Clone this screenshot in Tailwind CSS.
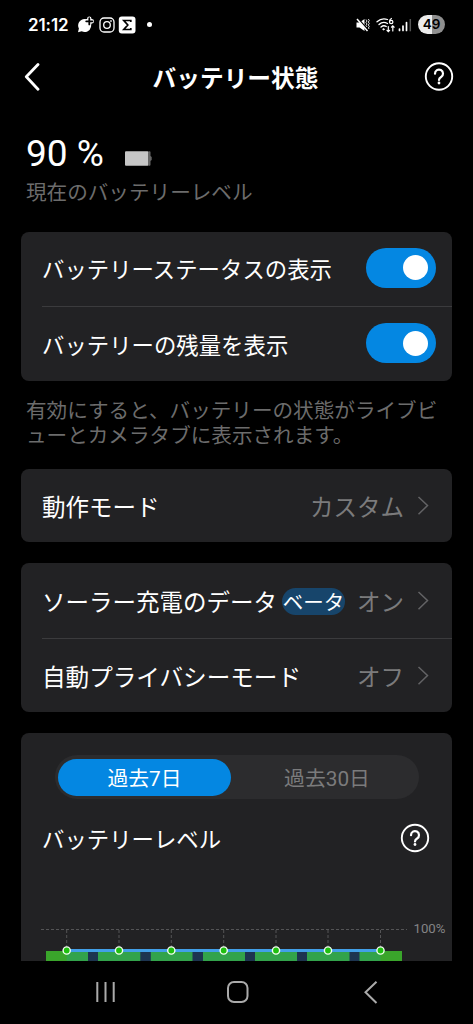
<!DOCTYPE html>
<html lang="ja">
<head>
<meta charset="utf-8">
<title>バッテリー状態</title>
<script src="https://cdn.jsdelivr.net/npm/@tailwindcss/browser@4"></script>
</head>
<body class="bg-black">
<div class="flex h-[1024px] w-[473px] flex-col overflow-hidden bg-black font-['Roboto','Noto_Sans_CJK_JP',sans-serif] text-white">

  <!-- Status bar -->
  <div class="flex h-[49px] shrink-0 items-center justify-between pr-[28px] pl-[28px]">
    <div class="flex items-center">
      <span class="w-[49px] font-['Inter'] text-[17px] leading-[20px] font-semibold tracking-[-0.1px] whitespace-nowrap">21:12</span>
      <svg class="h-[18px] w-[18px]" viewBox="0 0 18 18"><path d="M7.500 3a6.500 6.500 0 1 1-2.800 12.300L1 16.200l.9-3.600A6.500 6.500 0 0 1 7.500 3z" fill="#fff"/><path d="M12.300 2.800v5M9.800 5.300h5" stroke="#fff" stroke-width="4.400" stroke-linecap="round" stroke-linejoin="round"/><path d="M12.300 2.200v6.200M9.200 5.300h6.200" stroke="#000" stroke-width="1.800" stroke-linecap="round"/></svg>
      <svg class="ml-[3px] h-[18px] w-[18px]" viewBox="0 0 18 18" fill="none" stroke="#fff" stroke-width="1.300"><rect x="2" y="2" width="14" height="14" rx="4"/><circle cx="9" cy="9" r="3.300"/><circle cx="13" cy="5" r=".5" fill="#fff" stroke-width=".8"/></svg>
      <svg class="ml-[2px] h-[18px] w-[18px]" viewBox="0 0 18 18"><rect x=".8" y=".5" width="16.700" height="17" rx="3" fill="#fff"/><path d="M12.800 6V4.500H5.800L9.800 9l-4 4.500h7V12" fill="none" stroke="#000" stroke-width="1.700"/></svg>
      <span class="ml-[11px] h-[5px] w-[5px] rounded-full bg-white"></span>
    </div>
    <div class="flex items-center">
      <svg class="h-[16px] w-[14px]" viewBox="0 0 14 16"><path d="M.5 5.500h3L8.500 2v12L3.500 10.500h-3z" fill="#fff"/><path d="M1.800 1.200l10.500 12" stroke="#000" stroke-width="1.500"/><path d="M1 2l10.500 12" stroke="#fff" stroke-width="1.500"/><path d="M10 2.500l1 1.500-1 1.500 1 1.500-1 1.500 1 1.500M12.300 2l1 1.500-1 1.500 1 1.500-1 1.500 1 1.500-1 1.500 1 1" fill="none" stroke="#ddd" stroke-width="1"/></svg>
      <svg class="ml-[6px] h-[18px] w-[20px]" viewBox="0 0 20 18" fill="none" stroke="#fff" stroke-width="1.300" stroke-linecap="round"><path d="M1 5.800C4 3 8 2.200 11.500 3.500M3 8.500c2.500-2.300 5.800-2.600 8.500-1M5 11c1.700-1.400 3.700-1.500 5.300-.5"/><circle cx="7.500" cy="13.300" r=".8" fill="#fff" stroke-width=".6"/><path d="M15.400 2.500c-1.300.7-1.900 1.900-1.900 3.200M12.300 10.500v5M11 14.300l1.300 1.400 1.300-1.400M16.800 15v-5M15.500 11.200l1.300-1.400 1.300 1.400" stroke-width="1.200"/><circle cx="15.200" cy="6" r="1.700" stroke-width="1.200"/></svg>
      <svg class="ml-[2px] h-[16px] w-[14px]" viewBox="0 0 14 16"><path d="M1.500 12v1.500M5 9v4.500M8.500 5.500v8" stroke="#fff" stroke-width="1.700" stroke-linecap="round"/><path d="M12.300 2v12.300" stroke="#555" stroke-width="1.500"/></svg>
      <div class="ml-[6px] flex h-[19px] w-[27px] items-center justify-center rounded-full bg-linear-to-r from-[#ececec] from-50% to-[#8f8f8f] to-50% font-['Inter'] text-[13.500px] font-semibold text-black">49</div>
    </div>
  </div>

  <!-- App header -->
  <div class="flex h-[56px] shrink-0 items-center justify-between pr-[19px] pl-[24px]">
    <svg class="h-[28px] w-[29px]" viewBox="0 0 29 28"><path d="M14 1.500L2.300 13.800 14 26.200" fill="none" stroke="#fff" stroke-width="2.800" stroke-linecap="round" stroke-linejoin="round"/></svg>
    <h1 class="pt-[3px] pr-[6px] text-[23.700px] leading-[36px] font-bold whitespace-nowrap">バッテリー状態</h1>
    <svg class="h-[30px] w-[30px]" viewBox="0 0 30 30" fill="none" stroke="#fff"><circle cx="15" cy="14.500" r="13.200" stroke-width="1.900"/><path d="M11 11.700a4 4 0 1 1 6.100 3.300c-1.400.9-2.100 1.500-2.100 3" stroke-width="2.200" stroke-linecap="round"/><circle cx="15" cy="21" r="1.400" fill="#fff" stroke="none"/></svg>
  </div>

  <!-- Current level -->
  <div class="flex h-[127px] shrink-0 flex-col pt-[29px] pl-[26px]">
    <div class="flex items-end">
      <span class="text-[37px] leading-[40px] whitespace-nowrap">90 %</span>
      <svg class="mb-[8px] ml-[21px] h-[16px] w-[27px]" viewBox="0 0 27 16"><rect x="0" y="1.200" width="23.500" height="14.500" rx="1" fill="#c6c6c6"/><path d="M23.500 1.200h1a1 1 0 0 1 1 1V6l1.200 1v3l-1.200 1v3.700a1 1 0 0 1-1 1h-1z" fill="#666"/></svg>
    </div>
    <span class="mt-[4px] text-[20.600px] leading-[30px] whitespace-nowrap text-[#6c6c6c]">現在のバッテリーレベル</span>
  </div>

  <!-- Display toggles -->
  <section class="mx-[21px] flex h-[149px] shrink-0 flex-col rounded-[8px] bg-[#222224] pl-[21px]">
    <div class="flex h-[74px] items-center justify-between pr-[16px]">
      <span class="pt-[3px] text-[22.400px] leading-[32px] whitespace-nowrap">バッテリーステータスの表示</span>
      <span class="mb-[2px] flex h-[40px] w-[70px] items-center justify-end rounded-full bg-[#0487e2] pr-[8px]"><span class="h-[25px] w-[25px] rounded-full bg-white"></span></span>
    </div>
    <div class="h-[1.500px] bg-[#3b3b3d]"></div>
    <div class="flex h-[74px] items-center justify-between pr-[16px]">
      <span class="pt-[3px] text-[22.400px] leading-[32px] whitespace-nowrap">バッテリーの残量を表示</span>
      <span class="mb-[2px] flex h-[40px] w-[70px] items-center justify-end rounded-full bg-[#0487e2] pr-[8px]"><span class="h-[25px] w-[25px] rounded-full bg-white"></span></span>
    </div>
  </section>

  <p class="h-[88px] shrink-0 pt-[18px] pl-[26px] text-[20.600px] leading-[25px] whitespace-nowrap text-[#6c6c6c]">有効にすると、バッテリーの状態がライブビ<br>ューとカメラタブに表示されます。</p>

  <!-- Mode -->
  <section class="mx-[21px] flex h-[73px] shrink-0 items-center justify-between rounded-[8px] bg-[#222224] pr-[23px] pl-[21px]">
    <span class="pt-[4px] text-[23.500px] leading-[32px] whitespace-nowrap">動作モード</span>
    <span class="flex items-center gap-[13px]">
      <span class="pt-[4px] text-[23.500px] leading-[32px] whitespace-nowrap text-[#7b7b7c]">カスタム</span>
      <svg class="h-[20px] w-[12px]" viewBox="0 0 12 20"><path d="M1.500 1l9 8.500-9 8.800" fill="none" stroke="#636365" stroke-width="1.500"/></svg>
    </span>
  </section>

  <!-- Solar and privacy -->
  <section class="mx-[21px] mt-[21px] flex h-[149px] shrink-0 flex-col rounded-[8px] bg-[#222224] pl-[21px]">
    <div class="flex h-[75px] items-center pt-[2px] pr-[23px]">
      <span class="pt-[4px] text-[23.500px] leading-[32px] whitespace-nowrap">ソーラー充電のデータ</span>
      <span class="ml-[5px] flex h-[27px] w-[63px] items-center justify-center rounded-full bg-[#17456b] pt-[4px] text-[20.500px] leading-[27px] whitespace-nowrap">ベータ</span>
      <span class="ml-auto flex items-center gap-[13px]">
        <span class="pt-[4px] text-[23.500px] leading-[32px] whitespace-nowrap text-[#7b7b7c]">オン</span>
        <svg class="h-[20px] w-[12px]" viewBox="0 0 12 20"><path d="M1.500 1l9 8.500-9 8.800" fill="none" stroke="#636365" stroke-width="1.500"/></svg>
      </span>
    </div>
    <div class="h-[1.500px] bg-[#3b3b3d]"></div>
    <div class="flex h-[73px] items-center justify-between pr-[23px]">
      <span class="pt-[4px] text-[23.600px] leading-[32px] whitespace-nowrap">自動プライバシーモード</span>
      <span class="flex items-center gap-[13px]">
        <span class="pt-[4px] text-[23.500px] leading-[32px] whitespace-nowrap text-[#7b7b7c]">オフ</span>
        <svg class="h-[20px] w-[12px]" viewBox="0 0 12 20"><path d="M1.500 1l9 8.500-9 8.800" fill="none" stroke="#636365" stroke-width="1.500"/></svg>
      </span>
    </div>
  </section>

  <!-- Usage chart -->
  <section class="mx-[21px] mt-[21px] flex h-[228px] shrink-0 flex-col rounded-t-[8px] bg-[#222224]">
    <div class="mt-[22px] ml-[34px] flex h-[44px] w-[364px] shrink-0 items-center rounded-full bg-[#2c2c2e] px-[3px] text-[20.800px] leading-[30px]">
      <span class="flex h-[37px] w-[173px] items-center justify-center rounded-full bg-[#0487e2] pt-[4px] whitespace-nowrap">過去7日</span>
      <span class="flex flex-1 items-center justify-center pt-[4px] pl-[7px] whitespace-nowrap text-[#7b7b7c]">過去30日</span>
    </div>
    <div class="flex h-[77px] shrink-0 items-center justify-between pr-[22px] pl-[21px]">
      <span class="pt-[5px] text-[22.400px] leading-[32px] whitespace-nowrap">バッテリーレベル</span>
      <svg class="h-[30px] w-[30px]" viewBox="0 0 30 30" fill="none" stroke="#fff"><circle cx="15" cy="15" r="13.200" stroke-width="1.900"/><path d="M11 12.200a4 4 0 1 1 6.100 3.300c-1.400.9-2.100 1.500-2.100 3" stroke-width="2.200" stroke-linecap="round"/><circle cx="15" cy="21.500" r="1.400" fill="#fff" stroke="none"/></svg>
    </div>
    <svg class="h-[85px] w-[431px] shrink-0" viewBox="0 1 431 85" fill="none">
      <path d="M20 54.500h366" stroke="#545456" stroke-dasharray="3 2"/>
      <path d="M45.700 55v20M98 55v20M150.300 55v20M202.700 55v20M255 55v20M307 55v20M359.500 55v20" stroke="#545456" stroke-dasharray="3 2"/>
      <path d="M25 76h120v10H25zM145 76h236v10H145z" fill="#3aa52b"/>
      <path d="M45.700 75h313.800v11H45.700z" fill="#32a34b"/>
      <path d="M67 76h10v10H67zM119.300 76h10.500v10h-10.500zM171.500 76H182v10h-10.500zM224 76h10v10h-10zM276 76h10v10h-10zM328.500 76h10v10h-10z" fill="#1d3450"/>
      <path d="M45.700 75.500h313.800" stroke="#42a0e8" stroke-width="3"/>
      <g fill="#20c010" stroke="#f4fff2" stroke-width="1.400"><circle cx="45.700" cy="75.500" r="3.600"/><circle cx="98" cy="75.500" r="3.600"/><circle cx="150.300" cy="75.500" r="3.600"/><circle cx="202.700" cy="75.500" r="3.600"/><circle cx="255" cy="75.500" r="3.600"/><circle cx="307" cy="75.500" r="3.600"/><circle cx="359.500" cy="75.500" r="3.600"/></g>
      <text x="392.500" y="58" fill="#848486" font-size="13.200" font-family="Roboto">100%</text>
    </svg>
  </section>

  <!-- System navigation -->
  <nav class="flex flex-1 items-center">
    <svg class="h-[62px] w-[473px]" viewBox="0 0 473 62" fill="none" stroke="#aaa" stroke-width="2"><path d="M97.300 20v20M105.500 20v20M113.700 20v20"/><rect x="228" y="20" width="19.500" height="20" rx="6"/><path d="M376.500 19.800L365.500 30.300l11 10.700"/></svg>
  </nav>
</div>
</body>
</html>
